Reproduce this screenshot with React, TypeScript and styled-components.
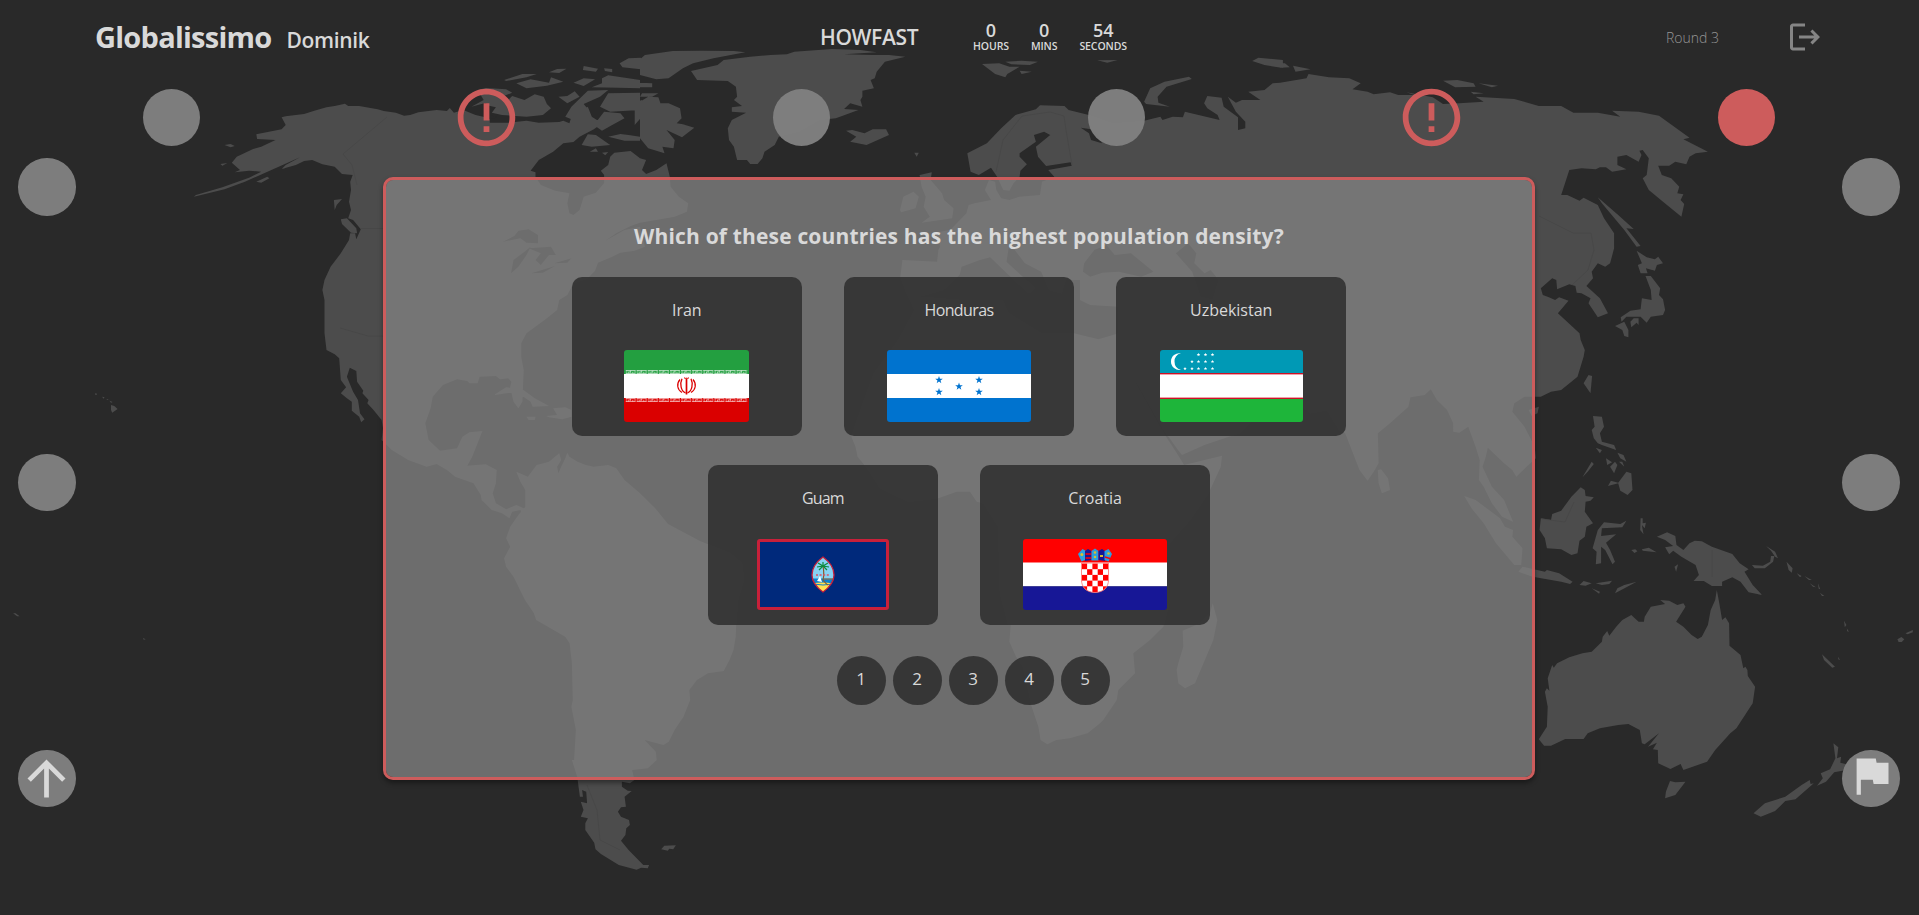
import React from "react";
import styled, { createGlobalStyle } from "styled-components";
import { MdArrowUpward, MdErrorOutline, MdFlag, MdLogout } from "react-icons/md";

const GlobalStyle = createGlobalStyle`
  * { box-sizing: border-box; }
  html, body { margin: 0; padding: 0; background: #292929; overflow: hidden; }
  body { font-family: "Open Sans", "Noto Sans", sans-serif; color: #d9d9d9; }
`;

/* ---------- World map ---------- */

// The map is stored in sheets: every sheet has its own origin and scale.
type Sheet = [x: number, y: number, sx: number, sy: number];
const NW: Sheet = [0, 0, 2.45, 3];
const N: Sheet = [640, 0, 2.45, 3];
const NE: Sheet = [1280, 0, 2.454, 3];
const W: Sheet = [0, 300, 2.45, 3];
const E: Sheet = [1280, 300, 2.454, 3];
const SE: Sheet = [1280, 600, 2.454, 3];
const S: Sheet = [400, 600, 2.24, 3];
const MID: Sheet = [780, 200, 2.45, 3];
const AF: Sheet = [700, 460, 3, 3];
const PX: Sheet = [0, 0, 1, 1];

type Part = [Sheet, string];

const outline = (...parts: Part[]) =>
  "M" +
  parts
    .map(([[ox, oy, sx, sy], pts]) =>
      pts
        .trim()
        .split(/\s+/)
        .map((p) => {
          const [x, y] = p.split(",").map(Number);
          return `${(ox + x / sx).toFixed(1)} ${(oy + y / sy).toFixed(1)}`;
        })
        .join("L")
    )
    .join("L") +
  "Z";

const many = (sheet: Sheet, ...shapes: string[]) => shapes.map((s) => outline([sheet, s])).join("");

const northAmerica = outline(
  [NW, `690,352 700,349 745,342 770,332 800,322 820,318 845,311 853,318 880,318 925,328 940,333 970,338 990,347 1005,345 1025,337 1070,330 1095,333 1102,324 1112,338 1135,330 1165,345 1200,355 1200,368 1245,368 1290,362 1320,368 1370,366 1380,362 1395,370 1400,350 1420,340 1440,320 1450,350 1475,370 1455,388 1420,410 1405,426 1380,430 1355,455 1320,480 1300,512 1312,517 1312,530 1325,555 1360,572 1395,580 1390,610 1395,640 1405,645 1420,630 1430,590 1460,578 1480,550 1480,525 1472,512 1490,495 1495,470 1505,458 1545,453 1568,475`],
  [N, `15,480 5,510 15,522 40,510 65,490 73,530 75,560 95,590 118,610 115,635 85,650 50,658 0,668`],
  [NW, `1545,678 1510,700 1482,723 1530,690 1568,680 1580,740 1555,752 1520,758 1500,770 1465,788 1458,812 1440,835 1405,850 1390,885 1370,900 1365,930 1340,955 1290,1000 1277,1030 1277,1070 1283,1110 1280,1205 1270,1225 1258,1205 1250,1160 1253,1145 1245,1135 1225,1138 1215,1128 1175,1130 1170,1150 1150,1150 1145,1143 1120,1138 1085,1155 1060,1190 1055,1225 1042,1270 1050,1320 1078,1352 1120,1345 1133,1310 1150,1297 1182,1293 1170,1330 1157,1370 1145,1397 1190,1393 1217,1410 1215,1450 1207,1480 1215,1510 1240,1528 1265,1515 1293,1530 1283,1560 1275,1530 1255,1535 1248,1555 1230,1540 1205,1530 1180,1500 1178,1485 1160,1450 1115,1430 1095,1410 1070,1392 1045,1400 1000,1380 960,1350 935,1320 938,1285 935,1260 915,1230 900,1210 903,1200 888,1180 890,1172 875,1145 873,1113 857,1103 850,1130 865,1175 877,1200 882,1240 893,1258 885,1267 880,1250 862,1232 862,1205 850,1195 835,1180 848,1162 835,1140 831,1075 820,1063 800,1050 795,1000 795,900 790,870 795,840 810,800 835,760 855,720 858,700 870,700 873,718 884,688 865,660 853,655 860,630 855,605 860,570 858,545 864,525 838,522 820,500 790,493 765,480 745,483 725,495 690,507 700,495 735,472 665,510 600,545 550,568 475,590 480,585 545,562 610,533 640,515 610,512 575,517 588,510 568,488 580,470 620,447 640,440 675,420 630,417 628,403 690,388 700,375`]
);

const southAmerica = outline(
  [W, `1265,515 1293,530 1315,495 1345,485 1370,460 1375,480 1365,500 1368,520 1375,500 1385,475 1390,458 1395,470 1415,485 1435,495 1455,500 1490,495 1510,505 1530,540 1568,580`],
  [PX, `655,508 668,524 700,541 730,553 742,563 744,580 738,600 736,625`],
  [S, `753,75 752,110 747,150 738,180 725,213 690,220 665,240 648,270 650,300 635,350 615,390 602,425 590,435 548,420 573,455 575,480 555,505 520,510 525,540 515,550 497,545 497,560 510,572 519,573 503,590 506,620 495,622 488,635 495,650 513,660 515,675 507,685 505,705 495,722 512,750 545,795 558,795 555,805 540,803 530,809 490,795 450,762 438,748 435,728 415,690 415,670 421,655 405,650 411,630 405,605 419,610 417,575 408,570 410,590 403,590 397,530 385,480 390,480 394,390 384,320 387,300 385,190 380,130 370,110 305,60 300,40 280,0`],
  [W, `1258,830 1240,800 1235,775 1250,740 1240,715 1250,680 1270,645 1287,620 1287,570 1275,545`]
);

const eurasiaAfrica = outline(
  [N, `802,460 850,430 885,385 920,345 970,328 980,316 1040,318 1050,330 1100,345 1160,370 1235,362 1275,350 1280,360 1305,350 1330,352 1335,335 1420,360 1415,345 1390,325 1382,310 1390,288 1425,293 1430,320 1465,352 1465,390 1483,385 1483,365 1460,335 1440,290 1460,308 1475,300 1520,300 1490,275 1530,270 1550,250 1568,248`],
  [NE, `40,240 65,235 70,222 120,232 170,235 198,250 178,268 215,275 230,283 270,277 290,285 330,285 310,277 375,292 400,312 440,310 500,305 480,290 575,297 635,318 690,318 720,338 780,338 835,350 815,332 880,335 930,347 1005,413 990,418 1050,455 1020,460 1005,470 997,493 970,485 955,497 928,497 937,525 960,535 980,560 975,580 990,583 983,600 992,612 985,650 940,605 905,570 890,535 900,525 905,475 890,450 882,452 887,465 880,485 850,465 828,470 828,495 850,508 815,515 800,502 785,502 775,508 740,505 710,510 690,585 705,585 735,602 745,593 780,615 795,655 820,700 820,745 810,790 798,800 780,790 765,815 768,835 752,858 785,895 805,940 780,952 757,910 762,895 740,880 728,878 725,858 710,853 680,868 678,840 668,835 640,865 645,885 660,892 675,900 685,892 708,902 682,940 700,960 735,1000 738,1020 748,1050 745,1070 730,1130 690,1170 665,1175 640,1190 600,1190`],
  [E, `575,310 570,335 600,380 625,440 628,475 605,500 580,530 570,510 550,490 510,443 505,470 497,500 520,560 550,600 560,630 572,665 545,650 520,610 500,560 488,540 490,480 480,440 462,380 440,398 425,395 425,370 410,330 385,300 370,268 355,285 320,292 315,320 270,370 240,400 242,490 230,515 215,542 195,510 160,400`],
  [MID, `1370,690 1340,630 1300,640 1260,600 1170,590 1110,540 1080,520 1140,600 1180,620 1160,660 1125,700 1040,735 985,765 975,750 940,690 880,560 835,470 825,440 850,500 880,570 930,680 975,765 990,795 1083,767 1080,800 1050,880`],
  [PX, `1190,520 1168,545 1166,570 1170,600 1165,620`],
  [AF, `1390,500 1350,540 1300,580 1305,640 1255,690 1250,720 1210,780`],
  [S, `1568,370 1540,400 1500,415 1470,420 1450,433 1435,420 1430,380 1415,320 1395,200 1380,170 1365,125 1368,75`],
  [AF, `925,495 900,400 895,200 850,130 830,125 810,95 770,95 715,115 625,125 540,85 490,5`],
  [MID, `230,830 190,770 185,740 175,710 200,620 230,520 290,420 330,330 310,280 295,230 300,180 385,185 388,150`],
  [N, `735,740 730,710 715,700 760,690 800,640 805,615 820,610 860,600 845,570 855,540 870,545 873,570 885,595 905,600 930,590 980,585 985,545 1015,530 1000,510 1058,497 1055,487 995,498 975,470 970,440 1005,405 990,395 965,405 970,425 930,460 930,470 948,493 932,512 930,530 915,550 905,572 890,570 875,530 860,503 830,525 810,515`]
);

const LAND = [
  northAmerica,
  southAmerica,
  eurasiaAfrica,
  many(
    N,
    "0,178 12,165 80,153 150,152 230,153 258,157 180,175 130,190 105,205 70,235 40,238 0,225",
    "125,213 190,195 205,180 270,170 320,165 360,163 378,155 470,147 540,150 580,157 500,163 570,165 610,165 650,170 600,185 580,215 575,235 565,240 573,265 545,272 545,290 540,300 545,320 515,310 500,327 535,330 480,355 440,360 390,395 340,410 330,435 305,455 300,475 288,492 270,492 262,480 238,480 230,440 218,420 215,385 225,360 260,338 225,335 225,322 250,318 230,300 238,290 235,260 215,243 140,240",
    "505,392 520,390 550,400 570,388 603,388 610,405 555,435 515,425 530,410",
    "0,305 20,290 45,292 50,310 70,310 98,325 102,355 90,370 105,373 133,383 103,412 65,390 85,420 82,445 55,440 60,460 20,445 0,415",
    "0,248 30,250 30,262 0,262",
    "5,280 45,280 30,290 0,290",
    "838,192 880,190 905,200 930,200 900,222 895,232 870,222",
    "895,185 935,182 975,185 955,195 910,193",
    "930,212 960,215 935,222",
    "1120,181 1170,180 1145,188",
    "1235,305 1250,265 1285,245 1345,230 1352,237 1290,260 1268,290 1270,308 1298,320 1240,312",
    "1500,183 1515,173 1575,180 1575,204 1530,195",
    "685,525 715,517 712,540 740,580 745,600 768,625 765,655 690,668 710,650 695,620 700,590 690,560",
    "637,630 645,590 670,575 683,590 675,625 640,637",
    "672,458 683,458 678,470"
  ),
  many(
    NW,
    "1195,300 1215,292 1245,300 1255,288 1285,300 1310,283 1332,290 1340,312 1350,325 1330,345 1290,350 1230,345 1205,338 1215,322 1190,315",
    "1170,270 1190,264 1240,268 1255,278 1200,305 1155,320 1185,300",
    "1235,240 1280,222 1315,222 1290,232 1240,243",
    "1265,250 1300,238 1345,248 1350,232 1380,245 1340,257 1290,265",
    "1345,217 1365,207 1388,206 1370,219",
    "1405,248 1430,235 1458,238 1430,258",
    "1430,198 1465,206 1460,215 1428,210",
    "1480,205 1500,207 1500,217 1482,213",
    "1518,190 1540,175 1570,173 1570,208 1525,202",
    "1475,235 1490,226 1568,240 1568,265 1515,263 1450,262 1475,250",
    "1368,290 1390,288 1408,274 1420,290 1390,310",
    "1425,290 1440,272 1490,270 1470,290 1430,312 1442,330 1415,365 1385,350 1400,320",
    "1470,320 1490,280 1568,278 1568,330 1495,335",
    "1455,375 1480,335 1520,340 1530,355 1500,375 1475,392",
    "1425,435 1440,403 1460,405 1495,435 1450,440",
    "1490,410 1520,402 1540,405 1568,410 1568,422 1530,422",
    "1445,455 1460,445 1465,455",
    "1475,458 1490,456 1483,466",
    "1555,310 1572,300 1580,340 1555,375",
    "835,658 850,655 873,685 875,700 860,698 838,672",
    "818,600 838,597 825,615 820,630",
    "628,545 655,530 660,535 640,548",
    "550,435 565,432 575,438 565,442",
    "540,492 557,489 545,497"
  ),
  many(
    NE,
    "400,242 435,240 475,250 480,260 430,262",
    "487,250 535,257 520,262",
    "468,275 500,280 475,283",
    "32,197 75,208 38,215",
    "0,188 12,190 24,202 0,203",
    "780,592 830,645 868,687 850,685 885,738 875,740 845,690 790,610",
    "875,752 900,772 920,778 928,770 940,790 925,795 920,812 898,805 902,820 885,820 878,795 888,790",
    "897,828 910,828 933,865 930,885 940,898 945,930 940,945 910,950 900,968 885,950 850,950 838,965 836,952 860,932 885,928 888,895 912,900 910,870"
  ),
  many(
    W,
    "272,315 280,318 288,327 275,338 272,330",
    "233,280 238,281 237,284 233,284",
    "250,290 256,292 254,296",
    "268,302 276,306 272,308",
    "260,297 266,298 264,300",
    "1210,285 1240,262 1280,268 1310,295 1345,318 1305,320 1300,305 1265,275",
    "1338,348 1365,345 1355,325 1385,322 1400,330 1400,350 1378,358 1345,352",
    "1290,350 1312,350 1310,360 1295,360",
    "32,940 38,940 48,949 42,949",
    "350,1014 357,1018 352,1019"
  ),
  many(
    E,
    "745,250 757,225 766,228 762,280",
    "610,330 635,320 632,340 618,348",
    "822,78 845,65 855,90 855,112 845,108 840,90",
    "860,65 868,55 880,55 880,75 875,68 862,82",
    "240,510 248,508 265,535 270,570 250,580 242,550",
    "452,588 480,600 540,655 552,680 572,690 570,710 595,745 592,795 575,795 530,730 500,670 470,625",
    "585,815 595,800 650,815 655,810 685,820 718,845 712,852 690,845 620,830",
    "735,855 745,843 765,850 750,857",
    "775,850 815,842 808,852 790,855",
    "765,865 785,875 783,881",
    "822,880 828,865 845,855 875,845 850,862",
    "640,655 665,660 668,642 690,632 715,590 738,562 748,570 750,588 770,592 762,602 750,605 748,635 768,670 752,680 748,710 735,722 730,760 715,765 690,748 655,745 650,715 637,690",
    "767,745 780,690 795,667 835,672 850,662 840,682 790,685 788,708 825,703 800,728 810,750 822,785 816,793 798,750 788,740 788,790 775,793 777,755",
    "885,655 890,655 890,670 898,668 895,685 888,675 892,703 884,690",
    "862,750 872,748 877,754 870,759",
    "888,748 905,743 924,757 890,752",
    "925,710 950,697 970,708 973,735 990,750 1005,730 1018,722 1035,724 1060,740 1110,762 1128,790 1150,808 1140,815 1160,855 1183,885 1150,877 1130,845 1110,832 1085,845 1085,858 1060,858 1040,843 1015,843 1028,825 1020,795 985,770 965,752 955,763 945,742 965,738 945,720",
    "1158,795 1185,797 1203,785 1205,768 1213,768 1210,785 1190,805 1165,805",
    "1193,738 1215,755 1222,775 1215,770 1205,752",
    "1243,785 1258,805 1256,818 1248,810",
    "1268,820 1280,828 1276,832",
    "1287,828 1305,840 1298,840",
    "1300,850 1315,862 1308,860",
    "1320,850 1326,868 1322,866",
    "1325,878 1336,888 1330,888",
    "968,800 977,793 972,815",
    "768,348 790,350 795,380 785,400 790,425 820,435 825,450 790,435 780,430 770,415 765,390 772,380",
    "775,443 790,450 785,460",
    "828,458 843,465 850,485 835,475",
    "800,475 815,487 803,495",
    "810,500 822,485 828,495 820,520",
    "832,485 840,485 845,500",
    "805,558 812,542 830,548 850,515 862,520 865,570 853,585 835,572 830,550",
    "742,532 765,485 770,492 755,515"
  ),
  many(
    SE,
    "635,418 655,380 657,320 650,275 655,265 661,272 657,235 668,195 672,203 680,190 710,172 742,160 765,155 790,125 792,110 803,93 808,107 825,80 840,60 862,45 880,65 893,65 895,50 910,20 945,12 933,0 955,2 975,15 990,10 995,20 972,65 990,80 1010,105 1025,117 1035,110 1050,75 1057,30 1068,0 1072,-30 1078,10 1085,60 1093,52 1102,70 1103,137 1130,165 1137,205 1142,200 1147,210 1148,228 1166,260 1160,310 1120,385 1105,400 1068,450 1048,485 990,510 983,492 958,507 928,490 927,450 915,448 925,428 903,440 930,400 895,433 888,430 883,390 855,372 830,375 785,385 755,400 745,417 700,417 665,437 648,437",
    "957,543 970,547 995,545 970,585 945,595 947,575",
    "1358,430 1370,442 1367,475 1377,470 1375,488 1390,493 1390,510 1360,517 1340,545 1318,557 1332,535 1327,520 1350,508 1363,475",
    "1300,540 1302,552 1310,550 1265,598 1240,603 1215,633 1180,650 1162,640 1190,610 1240,590 1280,555",
    "1330,163 1362,200 1355,203 1335,180",
    "1515,118 1525,111 1532,118 1526,126 1518,126",
    "1535,100 1553,90 1553,97 1540,103",
    "1384,62 1390,75 1386,82",
    "1391,85 1396,95 1392,94",
    "1370,170 1374,180 1370,178"
  ),
  many(S, "585,748 592,737 618,736 612,748 603,746 600,752"),
  many(AF, "1435,610 1450,560 1448,512 1500,490 1530,460 1538,430 1552,480 1540,540 1485,670 1455,685 1435,670 1430,630"),
].join("");

const WATER = [
  many(
    NW,
    "1232,725 1260,708 1270,692 1295,688 1318,705 1318,730 1290,728 1275,715",
    "1252,820 1258,780 1285,755 1300,740 1290,765 1270,800",
    "1295,745 1350,740 1362,765 1345,765 1325,795 1312,780 1325,760",
    "1302,820 1360,798 1330,818",
    "1358,790 1400,775 1390,788",
    "1180,345 1200,345 1220,352 1200,358"
  ),
  many(
    MID,
    "745,190 770,150 800,135 820,165 860,160 915,215 885,230 830,215 790,218 760,230 742,215",
    "970,160 1000,130 1020,160 1015,190 1040,220 1055,210 1075,240 1060,300 1030,290 1010,215",
    "340,290 400,270 440,225 445,200 490,180 515,172 560,225 610,280 625,265 555,185 560,145 575,150 600,190 640,215 660,270 690,280 700,240 735,240 735,300 760,315 830,320 830,400 780,418 720,400 640,400 560,340 545,300 440,300"
  ),
  many(N, "1080,383 1105,388 1120,400 1132,430 1105,420 1100,400"),
].join("");

// Faint national borders.
const BORDERS =
  "M387 117L343 154M343 154L352 165L357 185M361 228.500H384M340 328L368 336H384" +
  "M996 172L1003 140L1022 116L1050 112L1064 116M1072 165L1066 130L1064 116" +
  "M1539 216L1573 233L1591 233L1594 250L1588 270L1572 285" +
  "M1542 519L1565 522L1574 502M1712 550V577" +
  "M587 785L597 810L600 840L620 850";

const Backdrop = styled.svg`
  position: absolute;
  inset: 0;
  z-index: -1;
  display: block;
`;

const WorldMap = () => (
  <Backdrop width="1919" height="915" viewBox="0 0 1919 915" aria-hidden="true">
    <path d={LAND} fill="#4c4c4c" />
    <path d={WATER} fill="#292929" />
    <path d={BORDERS} fill="none" stroke="#464646" strokeWidth=".8" />
  </Backdrop>
);

/* ---------- Flags ---------- */

const FlagFrame = styled.svg`
  display: block;
  flex: none;
  border-radius: 3px;
`;

const star = (cx: number, cy: number, r: number) =>
  Array.from({ length: 10 }, (_, i) => {
    const a = (Math.PI / 5) * i - Math.PI / 2;
    const d = i % 2 ? r * 0.4 : r;
    return `${(cx + d * Math.cos(a)).toFixed(2)},${(cy + d * Math.sin(a)).toFixed(2)}`;
  }).join(" ");

const IranFlag = () => (
  <FlagFrame width="125" height="72" viewBox="0 0 125 72">
    <defs>
      <pattern id="kufic" width="11.1" height="4" patternUnits="userSpaceOnUse" x="1.5" y="20">
        <path d="M0 .5h10M0 3.5h10M1 .5v3M3.2 1.8v1.7M5.2 .5v2.2M7.2 1.8v1.7M9.4 .5v3M3.2 1.9h2" stroke="#fff" strokeWidth=".75" fill="none" opacity=".75" />
      </pattern>
    </defs>
    <rect width="125" height="24" fill="#239f40" />
    <rect y="24" width="125" height="24" fill="#fff" />
    <rect y="48" width="125" height="24" fill="#da0000" />
    <rect x="1.5" y="20" width="122" height="4" fill="url(#kufic)" />
    <rect x="1.5" y="48" width="122" height="4" fill="url(#kufic)" />
    <g stroke="#da0000" fill="none" transform="translate(62.5 36)">
      <path d="M0-7.5V8.5" strokeWidth="1.7" />
      <path d="M-4.5-7.2C-7-2-5.5 5-1 7M4.5-7.2C7-2 5.500 5 1 7" strokeWidth="1.3" />
      <path d="M-6.500-6.500C-10.500-2-9 4-4.500 6.500M6.500-6.500C10.500-2 9 4 4.500 6.500" strokeWidth="1.2" />
      <path d="M-2.500-8.200Q-1-7.300 0-7.800Q1-7.300 2.500-8.200" strokeWidth="1" />
    </g>
  </FlagFrame>
);

const HondurasFlag = () => (
  <FlagFrame width="144" height="72" viewBox="0 0 144 72">
    <rect width="144" height="72" fill="#0073cf" />
    <rect y="24" width="144" height="24" fill="#fff" />
    {[[52, 30], [52, 42], [72, 36.5], [92, 30], [92, 42]].map(([x, y]) => (
      <polygon key={`${x}-${y}`} points={star(x, y, 4)} fill="#0073cf" />
    ))}
  </FlagFrame>
);

const UzbekistanFlag = () => (
  <FlagFrame width="143" height="72" viewBox="0 0 143 72">
    <rect width="143" height="24" fill="#0099b5" />
    <rect y="23" width="143" height="26" fill="#ce1126" />
    <rect y="24" width="143" height="24" fill="#f0a0a8" />
    <rect y="25" width="143" height="22" fill="#fff" />
    <rect y="49" width="143" height="23" fill="#1eb53a" />
    <path d="M21 3.3A8.45 8.45 0 1 0 21 19.900A8.550 8.550 0 0 1 21 3.300Z" fill="#fff" />
    {[[38.5, 4.7], [45.5, 4.7], [52.5, 4.7], [32, 11.6], [38.5, 11.6], [45.5, 11.6], [52.5, 11.6], [25, 18.6], [32, 18.6], [38.5, 18.6], [45.5, 18.6], [52.5, 18.6]].map(([x, y]) => (
      <polygon key={`${x}-${y}`} points={star(x, y, 1.9)} fill="#fff" />
    ))}
  </FlagFrame>
);

const GuamFlag = () => (
  <FlagFrame width="132" height="71" viewBox="0 0 132 71">
    <defs>
      <clipPath id="seal">
        <path d="M66 18Q77 26 77 36Q77 45 66 53Q55 45 55 36Q55 26 66 18Z" />
      </clipPath>
    </defs>
    <rect width="132" height="71" fill="#c8203a" />
    <rect x="3" y="3" width="126" height="65" fill="#00297b" />
    <g clipPath="url(#seal)">
      <rect x="54" y="17" width="24" height="23" fill="#87d2f3" />
      <rect x="54" y="39.5" width="24" height="7" fill="#0a80d0" />
      <path d="M54 45q10-3 24 0v10H54z" fill="#ffe050" />
      <path d="M56 45q10 2 20 0" stroke="#0a80d0" fill="none" />
      <path d="M66 27q1.500 8 0 14q3 4 5 5" stroke="#8a5a28" strokeWidth="1.2" fill="none" />
      <path d="M67 40h10" stroke="#a86b2c" strokeWidth="1" />
      <path d="M66 27l-5-3M66 27l-6 1M66 27l-4 4M66 27l5-3M66 27l6 1M66 27l4 4M66 27v-4" stroke="#0f8a3c" strokeWidth="1.2" />
      <path d="M60 42l3-5l2 6z" fill="#fff" />
      <path d="M59 36h14" stroke="#d35b6d" strokeWidth="2" strokeDasharray="2 1.6" opacity=".8" />
    </g>
    <path d="M66 18Q77 26 77 36Q77 45 66 53Q55 45 55 36Q55 26 66 18Z" fill="none" stroke="#c8203a" strokeWidth="1.3" />
  </FlagFrame>
);

const CroatiaFlag = () => (
  <FlagFrame width="144" height="71" viewBox="0 0 144 71">
    <defs>
      <clipPath id="shield">
        <path d="M58.5 24h27v17c0 7-5 12.5-13.5 12.5S58.5 48 58.5 41z" />
      </clipPath>
    </defs>
    <rect width="144" height="24" fill="#ff0000" />
    <rect y="23.5" width="144" height="24" fill="#fff" />
    <rect y="47.3" width="144" height="24" fill="#171796" />
    <g clipPath="url(#shield)">
      <rect x="58" y="23" width="28" height="31" fill="#fff" />
      {Array.from({ length: 25 }, (_, i) => [i % 5, Math.floor(i / 5)])
        .filter(([c, r]) => (c + r) % 2 === 0)
        .map(([c, r]) => (
          <rect key={`${c}-${r}`} x={58.8 + c * 5.3} y={24.5 + r * 5.7} width="5.3" height="5.7" fill="#ff0000" />
        ))}
    </g>
    <path d="M58.5 24h27v17c0 7-5 12.5-13.5 12.5S58.5 48 58.5 41z" fill="none" stroke="#ff6b6b" strokeWidth=".8" />
    <path d="M55 15l4.500-5l3.500 2l-1 9l-3.500 1.500z" fill="#2a9fe0" />
    <path d="M62 12l3-2l3.500 2v9l-6.500 1z" fill="#171796" />
    <path d="M62.5 15h6M62.5 19h6" stroke="#ff0000" strokeWidth="1.3" />
    <path d="M68.500 12l3.500-2.500l3.500 2.500v9.500h-7z" fill="#2a9fe0" />
    <path d="M75.500 12l3.500-2l3 2v10l-6.500-1z" fill="#171796" />
    <path d="M81.500 12l4-2l3.500 5l-3.500 7.500l-4-1.500z" fill="#2a9fe0" />
    <path d="M82 18l5 1.500" stroke="#ff0000" strokeWidth="1.5" />
    <g fill="#d8c030">
      <circle cx="58.8" cy="15.5" r="1.5" />
      <circle cx="72" cy="13.5" r="1.3" />
      <circle cx="72" cy="18" r="1.3" />
      <path d="M77 16h3v2h-3z" />
      <circle cx="85.5" cy="14.5" r="1.3" />
    </g>
  </FlagFrame>
);

/* ---------- Layout ---------- */

const Page = styled.div`
  position: relative;
  z-index: 0;
  width: 1919px;
  height: 915px;
  overflow: hidden;
`;

const Header = styled.header`
  display: grid;
  grid-template-columns: 725px 153px 1fr 121px 132px;
  align-items: center;
  height: 74px;
  padding-left: 95px;
`;

const Brand = styled.div`
  display: flex;
  align-items: baseline;
  gap: 15px;
`;

const Label = styled.span<{ $size: number; $weight?: number; $spacing?: number }>`
  font-size: ${(p) => p.$size}px;
  font-weight: ${(p) => p.$weight ?? 600};
  letter-spacing: ${(p) => p.$spacing ?? 0}px;
  line-height: 1.3;
  white-space: nowrap;
`;

const Mode = styled(Label)`
  padding-top: 2px;
`;

const Clock = styled.div`
  display: flex;
  gap: 22px;
`;

const ClockUnit = styled.div`
  display: flex;
  flex-direction: column;
  align-items: center;
`;

const ClockValue = styled.span`
  font-size: 18px;
  font-weight: 600;
  line-height: 18px;
`;

const ClockName = styled.span`
  font-size: 10.5px;
  font-weight: 600;
  line-height: 14px;
  letter-spacing: -0.1px;
`;

const RoundLabel = styled.span`
  font-size: 14px;
  font-weight: 300;
  color: #959595;
`;

const Leave = styled.button`
  display: flex;
  padding: 0;
  border: 0;
  background: none;
  color: #858585;
`;

const TopTrack = styled.div`
  display: flex;
  justify-content: space-between;
  height: 57px;
  margin-top: 15px;
  padding: 0 144px 0 143px;
`;

const Middle = styled.main`
  display: flex;
  justify-content: space-between;
  margin-top: 12px;
  padding: 0 19px 0 18px;
`;

const Rail = styled.div`
  display: flex;
  flex-direction: column;
  justify-content: space-between;
  height: 649.3px;
`;

const Field = styled.div<{ $size: number; $active?: boolean }>`
  display: flex;
  align-items: center;
  justify-content: center;
  width: ${(p) => p.$size}px;
  height: ${(p) => p.$size}px;
  border-radius: 50%;
  color: #d9d9d9;
  background: ${(p) => (p.$active ? "#cd5c5c" : "rgba(128, 128, 128, 0.97)")};
`;

const Alert = styled.div`
  display: flex;
  align-items: center;
  justify-content: center;
  width: 57px;
  height: 57px;
  color: #cd5c5c;
  svg { flex: none; }
`;

const FlagIcon = styled(MdFlag)`
  margin-bottom: 5px;
`;

const Panel = styled.section`
  display: flex;
  flex-direction: column;
  align-items: center;
  width: 1152px;
  height: 603px;
  margin-top: 19px;
  padding-top: 42px;
  border: 3px solid #cd5c5c;
  border-radius: 10px;
  background: rgba(130, 130, 130, 0.77);
  background-clip: padding-box;
  box-shadow: 0 3px 5px rgba(0, 0, 0, 0.4);
`;

const Question = styled.h1`
  margin: 0 0 27px;
  font-size: 21px;
  font-weight: 700;
  line-height: 28px;
  letter-spacing: 0.17px;
  white-space: nowrap;
`;

const Answers = styled.div`
  display: flex;
  flex-wrap: wrap;
  justify-content: center;
  gap: 29px 42.8px;
  width: 775px;
`;

const Answer = styled.button`
  display: flex;
  flex-direction: column;
  align-items: center;
  justify-content: space-between;
  width: 229.4px;
  height: 159.3px;
  padding: 21px 0 14.3px;
  border: 0;
  border-radius: 10px;
  background: rgba(51, 51, 51, 0.92);
  color: #d9d9d9;
  font-family: inherit;
`;

const AnswerName = styled.span<{ $tracking: number }>`
  font-size: 16px;
  line-height: 24px;
  letter-spacing: ${(p) => p.$tracking}px;
`;

const Places = styled.div`
  display: flex;
  gap: 7px;
  margin-top: 31px;
  padding-left: 28px;
`;

const Place = styled.button`
  width: 49px;
  height: 49px;
  padding: 0 0 3px;
  border: 0;
  border-radius: 50%;
  background: rgba(51, 51, 51, 0.94);
  color: #d9d9d9;
  font: 400 17px "Open Sans", sans-serif;
`;

const clock = [
  { value: "0", name: "HOURS" },
  { value: "0", name: "MINS" },
  { value: "54", name: "SECONDS" },
];

const answers = [
  { name: "Iran", tracking: 0, Flag: IranFlag },
  { name: "Honduras", tracking: -0.6, Flag: HondurasFlag },
  { name: "Uzbekistan", tracking: 0, Flag: UzbekistanFlag },
  { name: "Guam", tracking: -0.8, Flag: GuamFlag },
  { name: "Croatia", tracking: 0, Flag: CroatiaFlag },
];

const track = ["plain", "alert", "plain", "plain", "alert", "active"];

export default function App() {
  return (
    <Page>
      <GlobalStyle />
      <WorldMap />
      <Header>
        <Brand>
          <Label $size={29} $weight={700} $spacing={-0.75}>Globalissimo</Label>
          <Label $size={21} $weight={600} $spacing={-0.35}>Dominik</Label>
        </Brand>
        <Mode $size={21} $spacing={-0.35}>HOWFAST</Mode>
        <Clock>
          {clock.map(({ value, name }) => (
            <ClockUnit key={name}>
              <ClockValue>{value}</ClockValue>
              <ClockName>{name}</ClockName>
            </ClockUnit>
          ))}
        </Clock>
        <RoundLabel>Round 3</RoundLabel>
        <Leave aria-label="Leave">
          <MdLogout size={36} />
        </Leave>
      </Header>
      <TopTrack>
        {track.map((kind, i) =>
          kind === "alert" ? (
            <Alert key={i}>
              <MdErrorOutline size={69} />
            </Alert>
          ) : (
            <Field key={i} $size={57} $active={kind === "active"} />
          )
        )}
      </TopTrack>
      <Middle>
        <Rail>
          <Field $size={57.6} />
          <Field $size={57.6} />
          <Field $size={57.6}>
            <MdArrowUpward size={57} />
          </Field>
        </Rail>
        <Panel>
          <Question>Which of these countries has the highest population density?</Question>
          <Answers>
            {answers.map(({ name, tracking, Flag }) => (
              <Answer key={name}>
                <AnswerName $tracking={tracking}>{name}</AnswerName>
                <Flag />
              </Answer>
            ))}
          </Answers>
          <Places>
            {[1, 2, 3, 4, 5].map((n) => (
              <Place key={n}>{n}</Place>
            ))}
          </Places>
        </Panel>
        <Rail>
          <Field $size={57.6} />
          <Field $size={57.6} />
          <Field $size={57.6}>
            <FlagIcon size={51} />
          </Field>
        </Rail>
      </Middle>
    </Page>
  );
}
